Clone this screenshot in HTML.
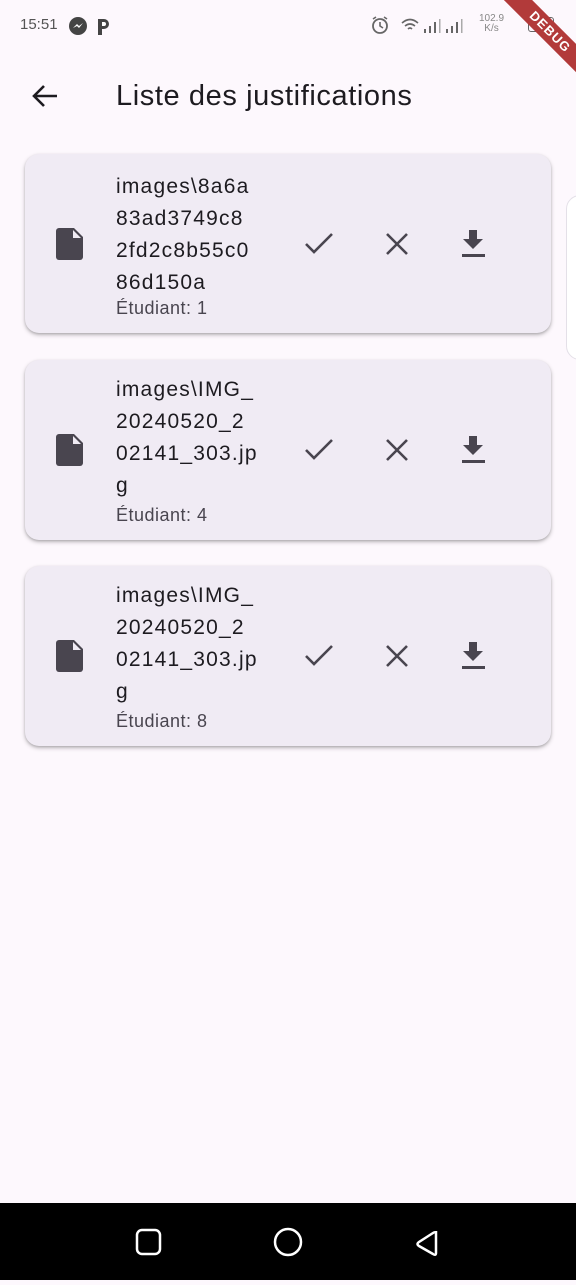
<!DOCTYPE html>
<html><head><meta charset="utf-8"><style>
*{margin:0;padding:0;box-sizing:border-box}
body{width:576px;height:1280px;background:#fdf8fd;font-family:"Liberation Sans",sans-serif;color:#1d1b20;position:relative;overflow:hidden}
.abs{position:absolute}
.card{position:absolute;left:25px;width:526px;background:#f0ebf4;border-radius:14px;box-shadow:0 2px 4px rgba(0,0,0,.25),0 1px 2px rgba(0,0,0,.12)}
.name{position:absolute;left:91px;font-size:21px;line-height:32px;color:#1d1b20;letter-spacing:1.2px}
.stu{position:absolute;left:91px;font-size:18px;color:#49454f;letter-spacing:.5px}
.ic{position:absolute}
</style></head><body>
<div class="abs" style="left:20px;top:16px;font-size:15px;color:#555">15:51</div>
<svg class="abs" style="left:68px;top:16px" width="46" height="20"><circle cx="10" cy="10" r="9" fill="#444"/><path d="M5 12l4-4 2 2 4-3-4 5-2-2z" fill="#fff"/><path d="M30 19V3h6a5 5 0 0 1 0 10h-2v6z" fill="#444"/><path d="M34 6v4h2a2 2 0 0 0 0-4z" fill="#fff"/></svg>
<svg class="abs" style="left:370px;top:15px" width="20" height="20"><circle cx="10" cy="11" r="7" stroke="#666" stroke-width="1.8" fill="none"/><path d="M10 7v4l3 2M3 4l3-2M17 4l-3-2" stroke="#666" stroke-width="1.6" fill="none"/></svg>
<svg class="abs" style="left:400px;top:16px" width="80" height="20"><path d="M2 7q8-7 16 0M5 10q5-4 10 0M8 13q2-2 4 0" stroke="#666" stroke-width="1.6" fill="none"/><rect x="24" y="13" width="2" height="4" fill="#666"/><rect x="29" y="10" width="2" height="7" fill="#666"/><rect x="34" y="6" width="2" height="11" fill="#666"/><rect x="39" y="3" width="1.5" height="14" fill="#aaa"/><rect x="46" y="13" width="2" height="4" fill="#666"/><rect x="51" y="10" width="2" height="7" fill="#666"/><rect x="56" y="6" width="2" height="11" fill="#666"/><rect x="61" y="3" width="1.5" height="14" fill="#aaa"/></svg>
<div class="abs" style="left:479px;top:14px;font-size:10px;color:#888;line-height:10px;text-align:center">102.9<br>K/s</div>
<div class="abs" style="left:528px;top:17px;width:26px;height:15px;border:1.5px solid #666;border-radius:3px;font-size:10px;text-align:center;color:#555">25</div>
<div class="abs" style="left:490px;top:22px;width:120px;height:20px;background:#b23a3a;color:#fff;font-size:13px;font-weight:bold;text-align:center;line-height:20px;transform:rotate(45deg);letter-spacing:1px">DEBUG</div>
<svg class="abs" style="left:30px;top:82px" width="30" height="28"><path d="M27 14H4M14 4L4 14l10 10" stroke="#1d1b20" stroke-width="2.6" fill="none"/></svg>
<div class="abs" style="left:116px;top:80px;font-size:29px;color:#1d1b20;letter-spacing:.6px">Liste des justifications</div>
<div class="abs" style="left:566px;top:195px;width:30px;height:165px;border:1.5px solid #e4e0e8;border-radius:14px;background:#fff"></div>

<div class="card" style="top:154px;height:179px">
<svg class="ic" style="left:31px;top:74px" width="28" height="32" viewBox="0 0 28 32"><path d="M3 0h15l9 9v20a3 3 0 0 1-3 3H3a3 3 0 0 1-3-3V3a3 3 0 0 1 3-3z" fill="#49454f"/><path d="M17 2v8h8" fill="#f0ebf4"/></svg>
<div class="name" style="top:17px">images\8a6a<br>83ad3749c8<br>2fd2c8b55c0<br>86d150a</div>
<div class="stu" style="top:144px">Étudiant: 1</div>
<svg class="ic" style="left:279px;top:78px" width="30" height="24"><path d="M2 12l8 8L28 2" stroke="#49454f" stroke-width="2.6" fill="none"/></svg>
<svg class="ic" style="left:360px;top:78px" width="24" height="24"><path d="M2 2l20 20M22 2L2 22" stroke="#49454f" stroke-width="2.6"/></svg>
<svg class="ic" style="left:436px;top:76px" width="24" height="28"><path d="M8 0h8v9h6L12 19 2 9h6z" fill="#49454f"/><rect x="1" y="24" width="23" height="3" fill="#49454f"/></svg>
</div>

<div class="card" style="top:360px;height:180px">
<svg class="ic" style="left:31px;top:74px" width="28" height="32" viewBox="0 0 28 32"><path d="M3 0h15l9 9v20a3 3 0 0 1-3 3H3a3 3 0 0 1-3-3V3a3 3 0 0 1 3-3z" fill="#49454f"/><path d="M17 2v8h8" fill="#f0ebf4"/></svg>
<div class="name" style="top:14px">images\IMG_<br>20240520_2<br>02141_303.jp<br>g</div>
<div class="stu" style="top:145px">Étudiant: 4</div>
<svg class="ic" style="left:279px;top:78px" width="30" height="24"><path d="M2 12l8 8L28 2" stroke="#49454f" stroke-width="2.6" fill="none"/></svg>
<svg class="ic" style="left:360px;top:78px" width="24" height="24"><path d="M2 2l20 20M22 2L2 22" stroke="#49454f" stroke-width="2.6"/></svg>
<svg class="ic" style="left:436px;top:76px" width="24" height="28"><path d="M8 0h8v9h6L12 19 2 9h6z" fill="#49454f"/><rect x="1" y="24" width="23" height="3" fill="#49454f"/></svg>
</div>

<div class="card" style="top:566px;height:180px">
<svg class="ic" style="left:31px;top:74px" width="28" height="32" viewBox="0 0 28 32"><path d="M3 0h15l9 9v20a3 3 0 0 1-3 3H3a3 3 0 0 1-3-3V3a3 3 0 0 1 3-3z" fill="#49454f"/><path d="M17 2v8h8" fill="#f0ebf4"/></svg>
<div class="name" style="top:14px">images\IMG_<br>20240520_2<br>02141_303.jp<br>g</div>
<div class="stu" style="top:145px">Étudiant: 8</div>
<svg class="ic" style="left:279px;top:78px" width="30" height="24"><path d="M2 12l8 8L28 2" stroke="#49454f" stroke-width="2.6" fill="none"/></svg>
<svg class="ic" style="left:360px;top:78px" width="24" height="24"><path d="M2 2l20 20M22 2L2 22" stroke="#49454f" stroke-width="2.6"/></svg>
<svg class="ic" style="left:436px;top:76px" width="24" height="28"><path d="M8 0h8v9h6L12 19 2 9h6z" fill="#49454f"/><rect x="1" y="24" width="23" height="3" fill="#49454f"/></svg>
</div>

<div class="abs" style="left:0;top:1203px;width:576px;height:77px;background:#000">
<svg width="576" height="77"><rect x="137" y="27" width="23" height="24" rx="5" stroke="#fff" stroke-width="2.5" fill="none"/><circle cx="288" cy="39" r="13" stroke="#fff" stroke-width="2.5" fill="none"/><path d="M436 28v22q0 3-3 1l-14-8q-3-2 0-4l14-9q3-2 3 1z" stroke="#fff" stroke-width="2.5" fill="none"/></svg>
</div>
</body></html>
